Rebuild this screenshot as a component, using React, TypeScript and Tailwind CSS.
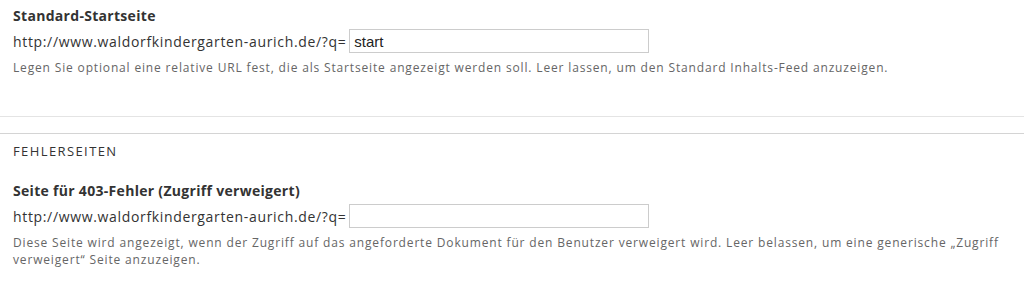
import React from 'react'

const BASE = 'http://www.waldorfkindergarten-aurich.de/?q='

const PathField = ({ label, value, help }: { label: string; value: string; help: string }) => {
    return (
        <div className="pl-[13px]">
            <label className="block text-[14px] leading-[20px] font-bold tracking-[0.3px] text-[#333]">{label}</label>
            <div className="mt-[3px] flex items-center text-[14px] tracking-[0.66px] text-[#333]">
                <span>{BASE}</span>
                <input
                    readOnly
                    value={value}
                    className="ml-[3px] h-[24px] w-[300px] border border-[#ccc] bg-white px-[4px] text-[15px] tracking-normal text-[#222] outline-none"
                    style={{ fontFamily: '"Liberation Sans", Arial, sans-serif' }}
                />
            </div>
            <p className="mt-[6px] pr-[8px] text-[12px] leading-[17px] tracking-[0.84px] text-[#666]">{help}</p>
        </div>
    )
}

const App = () => {
    return (
        <div className="h-[293px] w-[1024px] overflow-hidden bg-white" style={{ fontFamily: '"Open Sans", "Noto Sans", sans-serif' }}>
            <div className="pt-[6px]">
                <PathField
                    label="Standard-Startseite"
                    value="start"
                    help="Legen Sie optional eine relative URL fest, die als Startseite angezeigt werden soll. Leer lassen, um den Standard Inhalts-Feed anzuzeigen."
                />
            </div>

            <div className="mt-[40px] border-t border-[#e4e4e4]" />

            <fieldset className="mt-[16px] border-t border-[#d4d4d4]">
                <div className="pl-[13px] pt-[8px] text-[13px] leading-[18px] tracking-[1.4px] text-[#333]">FEHLERSEITEN</div>
                <div className="mt-[21px]">
                    <PathField
                        label="Seite für 403-Fehler (Zugriff verweigert)"
                        value=""
                        help="Diese Seite wird angezeigt, wenn der Zugriff auf das angeforderte Dokument für den Benutzer verweigert wird. Leer belassen, um eine generische „Zugriff verweigert“ Seite anzuzeigen."
                    />
                </div>
            </fieldset>
        </div>
    )
}

export default App
